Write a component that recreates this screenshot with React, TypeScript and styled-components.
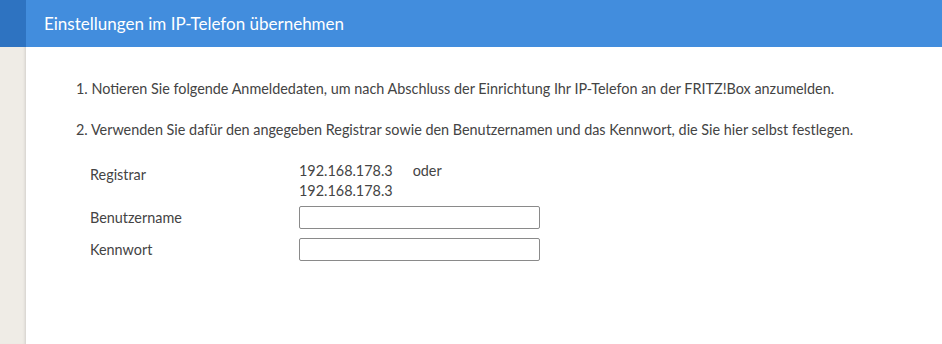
import React from "react";
import styled, { createGlobalStyle } from "styled-components";

const Global = createGlobalStyle`
  html, body { margin: 0; padding: 0; background: #fff; }
  body { font-family: "Lato", "Liberation Sans", sans-serif; }
  * { box-sizing: border-box; }
`;

const Page = styled.div`
  display: flex;
  width: 942px;
  height: 344px;
  overflow: hidden;
`;

const Sidebar = styled.div`
  width: 26px;
  flex: none;
  display: flex;
  flex-direction: column;
  background: #efece6;
  box-shadow: inset -3px 0 3px -2px rgba(0,0,0,0.12);
`;

const SidebarTop = styled.div`
  height: 47px;
  background: #2e73c1;
`;

const Main = styled.div`
  flex: 1;
  display: flex;
  flex-direction: column;
`;

const Header = styled.div`
  height: 47px;
  background: #428ddd;
  color: #fff;
  display: flex;
  align-items: center;
  padding-left: 18px;
  font-size: 17px;
  padding-bottom: 1px;
`;

const Content = styled.div`
  padding: 32px 0 0 50px;
  color: #444;
  font-size: 14.4px;
`;

const Step = styled.p`
  margin: 0 0 22px 0;
  line-height: 19px;
`;

const Form = styled.div`
  display: grid;
  grid-template-columns: 209px 241px;
  row-gap: 9px;
  margin-left: 14px;
  margin-top: 5px;
`;

const Label = styled.div<{ $top?: boolean }>`
  display: flex;
  align-items: ${(p) => (p.$top ? "flex-start" : "center")};
  padding-top: ${(p) => (p.$top ? "4px" : "0")};
  line-height: 20px;
`;

const Values = styled.div`
  line-height: 20px;
  margin-bottom: -4px;
`;

const IpRow = styled.div`
  display: flex;
  gap: 20px;
`;

const Input = styled.input`
  width: 241px;
  height: 23px;
  border: 1px solid #8a8a8a;
  border-radius: 2px;
  margin: 0;
  padding: 0 4px;
  font: inherit;
`;

export default function App() {
  return (
    <>
      <Global />
      <Page>
        <Sidebar>
          <SidebarTop />
        </Sidebar>
        <Main>
          <Header>Einstellungen im IP-Telefon übernehmen</Header>
          <Content>
            <Step>1. Notieren Sie folgende Anmeldedaten, um nach Abschluss der Einrichtung Ihr IP-Telefon an der FRITZ!Box anzumelden.</Step>
            <Step>2. Verwenden Sie dafür den angegeben Registrar sowie den Benutzernamen und das Kennwort, die Sie hier selbst festlegen.</Step>
            <Form>
              <Label $top>Registrar</Label>
              <Values>
                <IpRow>
                  <span>192.168.178.3</span>
                  <span>oder</span>
                </IpRow>
                <div>192.168.178.3</div>
              </Values>
              <Label>Benutzername</Label>
              <Input type="text" />
              <Label>Kennwort</Label>
              <Input type="password" />
            </Form>
          </Content>
        </Main>
      </Page>
    </>
  );
}
